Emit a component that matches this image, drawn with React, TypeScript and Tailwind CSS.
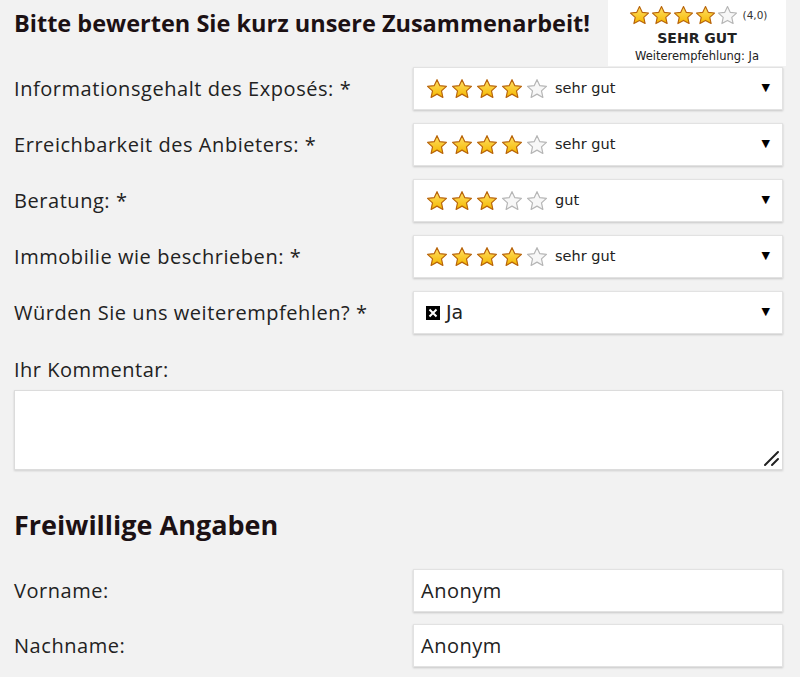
import type { ReactNode } from 'react'

const font = { fontFamily: '"Open Sans", "Liberation Sans", sans-serif' }
const verdana = { fontFamily: '"DejaVu Sans", Verdana, sans-serif' }

function Star({ filled, size = 21 }: { filled: boolean; size?: number }) {
  return (
    <svg width={size} height={size} viewBox="0 0 24 24" className="shrink-0">
      <defs>
        <linearGradient id="gold" x1="0" y1="0" x2="0" y2="1">
          <stop offset="0" stopColor="#ffe066" />
          <stop offset="1" stopColor="#f5b800" />
        </linearGradient>
      </defs>
      <path
        d="M12 1.8l3.1 6.6 7.2.8-5.4 4.9 1.5 7.1L12 17.6l-6.4 3.6 1.5-7.1L1.7 9.2l7.2-.8z"
        fill={filled ? 'url(#gold)' : '#f7f7f7'}
        stroke={filled ? '#b8640a' : '#b5b5b5'}
        strokeWidth="1.3"
        strokeLinejoin="round"
      />
    </svg>
  )
}

function Stars({ n, size, gap }: { n: number; size?: number; gap: string }) {
  return (
    <div className={`flex ${gap}`}>
      {[0, 1, 2, 3, 4].map((i) => (
        <Star key={i} filled={i < n} size={size} />
      ))}
    </div>
  )
}

function Box({ children, arrow }: { children: ReactNode; arrow?: boolean }) {
  return (
    <div className="flex-1 h-[43px] bg-white border border-[#e2e2e2] shadow-[0_1px_2px_rgba(0,0,0,0.18)] flex items-center pl-[12px] pr-[12px]">
      <div className="flex-1 flex items-center">{children}</div>
      {arrow && <span className="text-[11px] text-black" style={verdana}>▼</span>}
    </div>
  )
}

function Row({ label, children }: { label: string; children: ReactNode }) {
  return (
    <div className="flex items-center">
      <div className="w-[399px] text-[20px] tracking-[0.55px] text-[#222]">{label}</div>
      {children}
    </div>
  )
}

function RatingSelect({ n, text }: { n: number; text: string }) {
  return (
    <Box arrow>
      <Stars n={n} size={22} gap="gap-[3px]" />
      <span className="ml-[7px] text-[14.5px] text-[#222]" style={verdana}>{text}</span>
    </Box>
  )
}

export default function App() {
  return (
    <div className="relative w-[800px] h-[677px] overflow-hidden bg-[#f2f2f2] pl-[14px] pr-[17px]" style={font}>
      <div className="absolute top-0 left-[608px] w-[178px] h-[66px] bg-white flex flex-col items-center pt-[5px]" style={verdana}>
        <div className="flex items-center gap-[5px] ml-[2px]">
          <Stars n={4} size={21} gap="gap-[1px]" />
          <span className="text-[10.5px] text-[#333]">(4,0)</span>
        </div>
        <div className="mt-[5px] text-[14px] font-bold text-[#222] leading-none">SEHR GUT</div>
        <div className="mt-[6px] text-[11.5px] text-[#222] leading-none">Weiterempfehlung: Ja</div>
      </div>

      <h1 className="pt-[6px] h-[67px] text-[23.5px] font-bold text-[#1c1114] leading-[34px]">
        Bitte bewerten Sie kurz unsere Zusammenarbeit!
      </h1>

      <div className="flex flex-col gap-[13px]">
        <Row label="Informationsgehalt des Exposés: *">
          <RatingSelect n={4} text="sehr gut" />
        </Row>
        <Row label="Erreichbarkeit des Anbieters: *">
          <RatingSelect n={4} text="sehr gut" />
        </Row>
        <Row label="Beratung: *">
          <RatingSelect n={3} text="gut" />
        </Row>
        <Row label="Immobilie wie beschrieben: *">
          <RatingSelect n={4} text="sehr gut" />
        </Row>
        <Row label="Würden Sie uns weiterempfehlen? *">
          <Box arrow>
            <span className="w-[14px] h-[14px] bg-black text-white flex items-center justify-center">
              <svg width="10" height="10" viewBox="0 0 10 10">
                <path d="M1.5 1.5l7 7M8.5 1.5l-7 7" stroke="white" strokeWidth="2" />
              </svg>
            </span>
            <span className="ml-[6px] text-[19px] text-[#222]" style={verdana}>Ja</span>
          </Box>
        </Row>
      </div>

      <div className="mt-[24px] text-[20px] tracking-[0.5px] text-[#222] leading-[24px]">Ihr Kommentar:</div>
      <div className="mt-[8px] h-[80px] bg-white border border-[#dcdcdc] shadow-[0_1px_2px_rgba(0,0,0,0.15)] flex items-end justify-end p-[2px]">
        <svg width="18" height="18" viewBox="0 0 18 18">
          <path d="M16 3L3 16M16 10L10 16" stroke="#222" strokeWidth="2" strokeLinecap="round" />
        </svg>
      </div>

      <h2 className="mt-[40px] text-[27px] font-bold text-[#1c1114] leading-[30px]">Freiwillige Angaben</h2>

      <div className="mt-[29px] flex flex-col gap-[12px]">
        <Row label="Vorname:">
          <Box>
            <span className="-ml-[5px] text-[20px] tracking-[0.5px] text-[#222]">Anonym</span>
          </Box>
        </Row>
        <Row label="Nachname:">
          <Box>
            <span className="-ml-[5px] text-[20px] tracking-[0.5px] text-[#222]">Anonym</span>
          </Box>
        </Row>
      </div>
    </div>
  )
}
